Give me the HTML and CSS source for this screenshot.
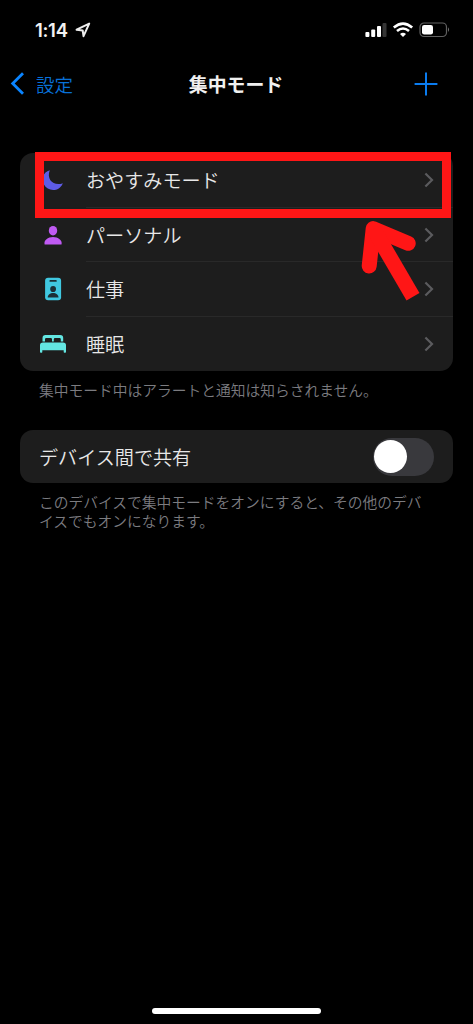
FILE: index.html
```html
<!DOCTYPE html>
<html lang="ja">
<head>
<meta charset="utf-8">
<title>集中モード</title>
<link rel="stylesheet" href="styles.css">
</head>
<body>
<div class="screen">
  <header class="status">
    <span class="time">1:14</span>
    <svg class="location" width="16" height="16" viewBox="0 0 16 16"><path d="M14.2 1.6 1.6 7.7 7.7 8.5 8.5 14.2Z" fill="none" stroke="#eee" stroke-width="2" stroke-linejoin="round"/></svg>
    <svg class="indicators" width="86" height="16" viewBox="0 0 86 16">
      <g fill="#fff">
        <rect x="0.4" y="10" width="4" height="5" rx="1"/>
        <rect x="6.2" y="7.4" width="4" height="7.6" rx="1"/>
        <rect x="12" y="4" width="4" height="11" rx="1"/>
        <rect x="17.5" y="1" width="4" height="14" rx="1" fill="#343434"/>
      </g>
      <g fill="none" stroke="#fff" stroke-width="2.6">
        <path d="M28.8 5.5Q38 -2.3 47.2 5.5"/>
        <path d="M32 9Q38 4 44 9"/>
      </g>
      <path d="M35 12Q38 9.3 41 12L38 15Z" fill="#fff"/>
      <rect x="55" y="1" width="26.5" height="13.5" rx="4" fill="none" stroke="#606060" stroke-width="1.2"/>
      <rect x="57" y="3" width="11" height="9.5" rx="2.2" fill="#fff"/>
      <path d="M83 5.3q2.1 2.3 0 4.6Z" fill="#707070"/>
    </svg>
  </header>
  <nav class="nav">
    <div class="back">
      <svg width="15" height="25" viewBox="0 0 15 25"><path d="M13 2.2 2.7 12.5 13 22.8" fill="none" stroke="#0a84ff" stroke-width="2.8"/></svg>
      <span>設定</span>
    </div>
    <h1 class="title">集中モード</h1>
    <svg class="add" width="24" height="24" viewBox="0 0 24 24"><path d="M12 .6V23.4M.6 12H23.4" stroke="#0a7cf0" stroke-width="2"/></svg>
  </nav>
  <main class="content">
    <section class="card list">
      <div class="row">
        <svg class="icon" width="28" height="28" viewBox="0 0 28 28"><path d="M10.8 4.2C3.8 6.2 2.2 13 4.8 18.3C8.7 25.9 20.2 26.3 23.8 17.2C15.2 20.5 7 13.8 10.8 4.2Z" fill="#5e5ce6"/></svg>
        <div class="cell"><span>おやすみモード</span><svg class="chevron" width="10" height="16" viewBox="0 0 10 16"><path d="M1.4 1.5 8 8 1.4 14.5"/></svg></div>
      </div>
      <div class="row">
        <svg class="icon" width="28" height="28" viewBox="0 0 28 28"><g fill="#bf5af2"><ellipse cx="14" cy="9.7" rx="4.2" ry="4.8"/><path d="M5.6 23.6C4.4 19.4 9 16.1 14 16.1S23.7 19.4 22.5 23.6Z"/></g></svg>
        <div class="cell"><span>パーソナル</span><svg class="chevron" width="10" height="16" viewBox="0 0 10 16"><path d="M1.4 1.5 8 8 1.4 14.5"/></svg></div>
      </div>
      <div class="row">
        <svg class="icon" width="28" height="28" viewBox="0 0 28 28"><rect x="6.1" y="2.8" width="16" height="22.4" rx="3" fill="#40c8e0"/><g fill="#1c3036"><rect x="10.4" y="5" width="7.4" height="1.8" rx=".9"/><ellipse cx="14.1" cy="14" rx="2.9" ry="3.1"/><path d="M8.7 22.6C8.5 19.9 11.2 18 14.1 18S19.7 19.9 19.5 22.6Z"/></g></svg>
        <div class="cell"><span>仕事</span><svg class="chevron" width="10" height="16" viewBox="0 0 10 16"><path d="M1.4 1.5 8 8 1.4 14.5"/></svg></div>
      </div>
      <div class="row">
        <svg class="icon" width="28" height="28" viewBox="0 0 28 28"><g fill="#63e6e2"><path d="M3.5 11.4V8Q3.5 5 6.5 5H21.2Q24.2 5 24.2 8V11.4H21.8V9.2Q21.8 8 20.6 8H16Q14.8 8 14.8 9.2V11.4H13V9.2Q13 8 11.8 8H7.2Q6 8 6 9.2V11.4Z"/><path d="M1 22V15.2Q1 12.4 4 12.4H24Q27 12.4 27 15.2V22Q27 22.7 26.2 22.7H25.4Q24.7 22.7 24.7 22V20.2H3.3V22Q3.3 22.7 2.6 22.7H1.8Q1 22.7 1 22Z"/></g></svg>
        <div class="cell"><span>睡眠</span><svg class="chevron" width="10" height="16" viewBox="0 0 10 16"><path d="M1.4 1.5 8 8 1.4 14.5"/></svg></div>
      </div>
    </section>
    <p class="note">集中モード中はアラートと通知は知らされません。</p>
    <section class="card share">
      <span>デバイス間で共有</span>
      <span class="toggle"><span class="knob"></span></span>
    </section>
    <p class="note">このデバイスで集中モードをオンにすると、その他のデバ<br>イスでもオンになります。</p>
  </main>
  <div class="home"></div>
  <div class="highlight"></div>
  <svg class="arrow" width="70" height="90" viewBox="355 215 70 90"><g fill="none" stroke="#ff1616" stroke-width="15"><path d="M369.2 266 373.2 228.6 408.2 243.3" stroke-linecap="round" stroke-linejoin="round"/><path d="M373.5 229 413 296.7"/></g></svg>
</div>
</body>
</html>
```
FILE: styles.css
```css
* { box-sizing: border-box; }
body {
  margin: 0;
  background: #000;
  color: #e8e8e8;
  font-family: "Noto Sans CJK JP", sans-serif;
}
svg { display: block; flex: none; }
.screen {
  position: relative;
  display: flex;
  flex-direction: column;
  width: 473px;
  height: 1024px;
  overflow: hidden;
}
.status {
  display: flex;
  align-items: center;
  height: 60px;
  padding: 0 22px 0 35px;
}
.time {
  width: 35px;
  font: 600 18.5px/24px Inter, sans-serif;
  letter-spacing: -0.3px;
  color: #f2f2f2;
  white-space: nowrap;
}
.location { margin-left: 5px; }
.indicators { margin-left: auto; }
.nav {
  display: grid;
  grid-template-columns: 1fr auto 1fr;
  align-items: center;
  height: 47px;
  padding: 0 35px 0 10px;
}
.back {
  display: flex;
  align-items: center;
  gap: 11px;
  font-size: 18.5px;
  line-height: 26px;
  font-weight: 350;
  color: #0870d8;
}
.title {
  margin: 0 0 0 24px;
  font-size: 18.9px;
  line-height: 26px;
  font-weight: 700;
  color: #f0f0f0;
}
.add { justify-self: end; }
.content {
  padding: 46px 20px 0 19.5px;
}
.card {
  background: #1d1d1d;
  border-radius: 13px;
  overflow: hidden;
}
.list { height: 218px; }
.row {
  display: flex;
  align-items: center;
  height: 54.5px;
  padding-left: 19.5px;
}
.cell {
  display: flex;
  flex: 1;
  align-items: center;
  justify-content: space-between;
  height: 100%;
  margin-left: 19px;
  padding: 1px 19.5px 0 0;
  border-bottom: 1px solid #292929;
  font-size: 19.1px;
  line-height: 28px;
  font-weight: 350;
}
.row:last-child .cell { border-bottom-color: transparent; }
.chevron {
  fill: none;
  stroke: #5b5b5e;
  stroke-width: 2.2;
}
.note {
  margin: 0;
  padding: 8.5px 0 0 19.5px;
  font-size: 14.76px;
  line-height: 19.5px;
  font-weight: 350;
  color: #7c7c80;
  white-space: nowrap;
}
.share {
  display: flex;
  align-items: center;
  justify-content: space-between;
  height: 53px;
  margin-top: 31px;
  padding: 0 19.5px;
  font-size: 19.1px;
  font-weight: 350;
}
.toggle {
  width: 61px;
  height: 38px;
  padding: 2.5px 1.5px;
  border-radius: 19px;
  background: #39393d;
}
.knob {
  display: block;
  width: 33px;
  height: 33px;
  border-radius: 50%;
  background: #fff;
}
.home {
  width: 169px;
  height: 6px;
  margin: auto auto 10px 152px;
  border-radius: 3px;
  background: #fff;
}
.highlight {
  position: absolute;
  left: 35px;
  top: 152px;
  width: 416px;
  height: 66px;
  border: 9px solid #ff1616;
}
.arrow {
  position: absolute;
  left: 355px;
  top: 215px;
}
```
